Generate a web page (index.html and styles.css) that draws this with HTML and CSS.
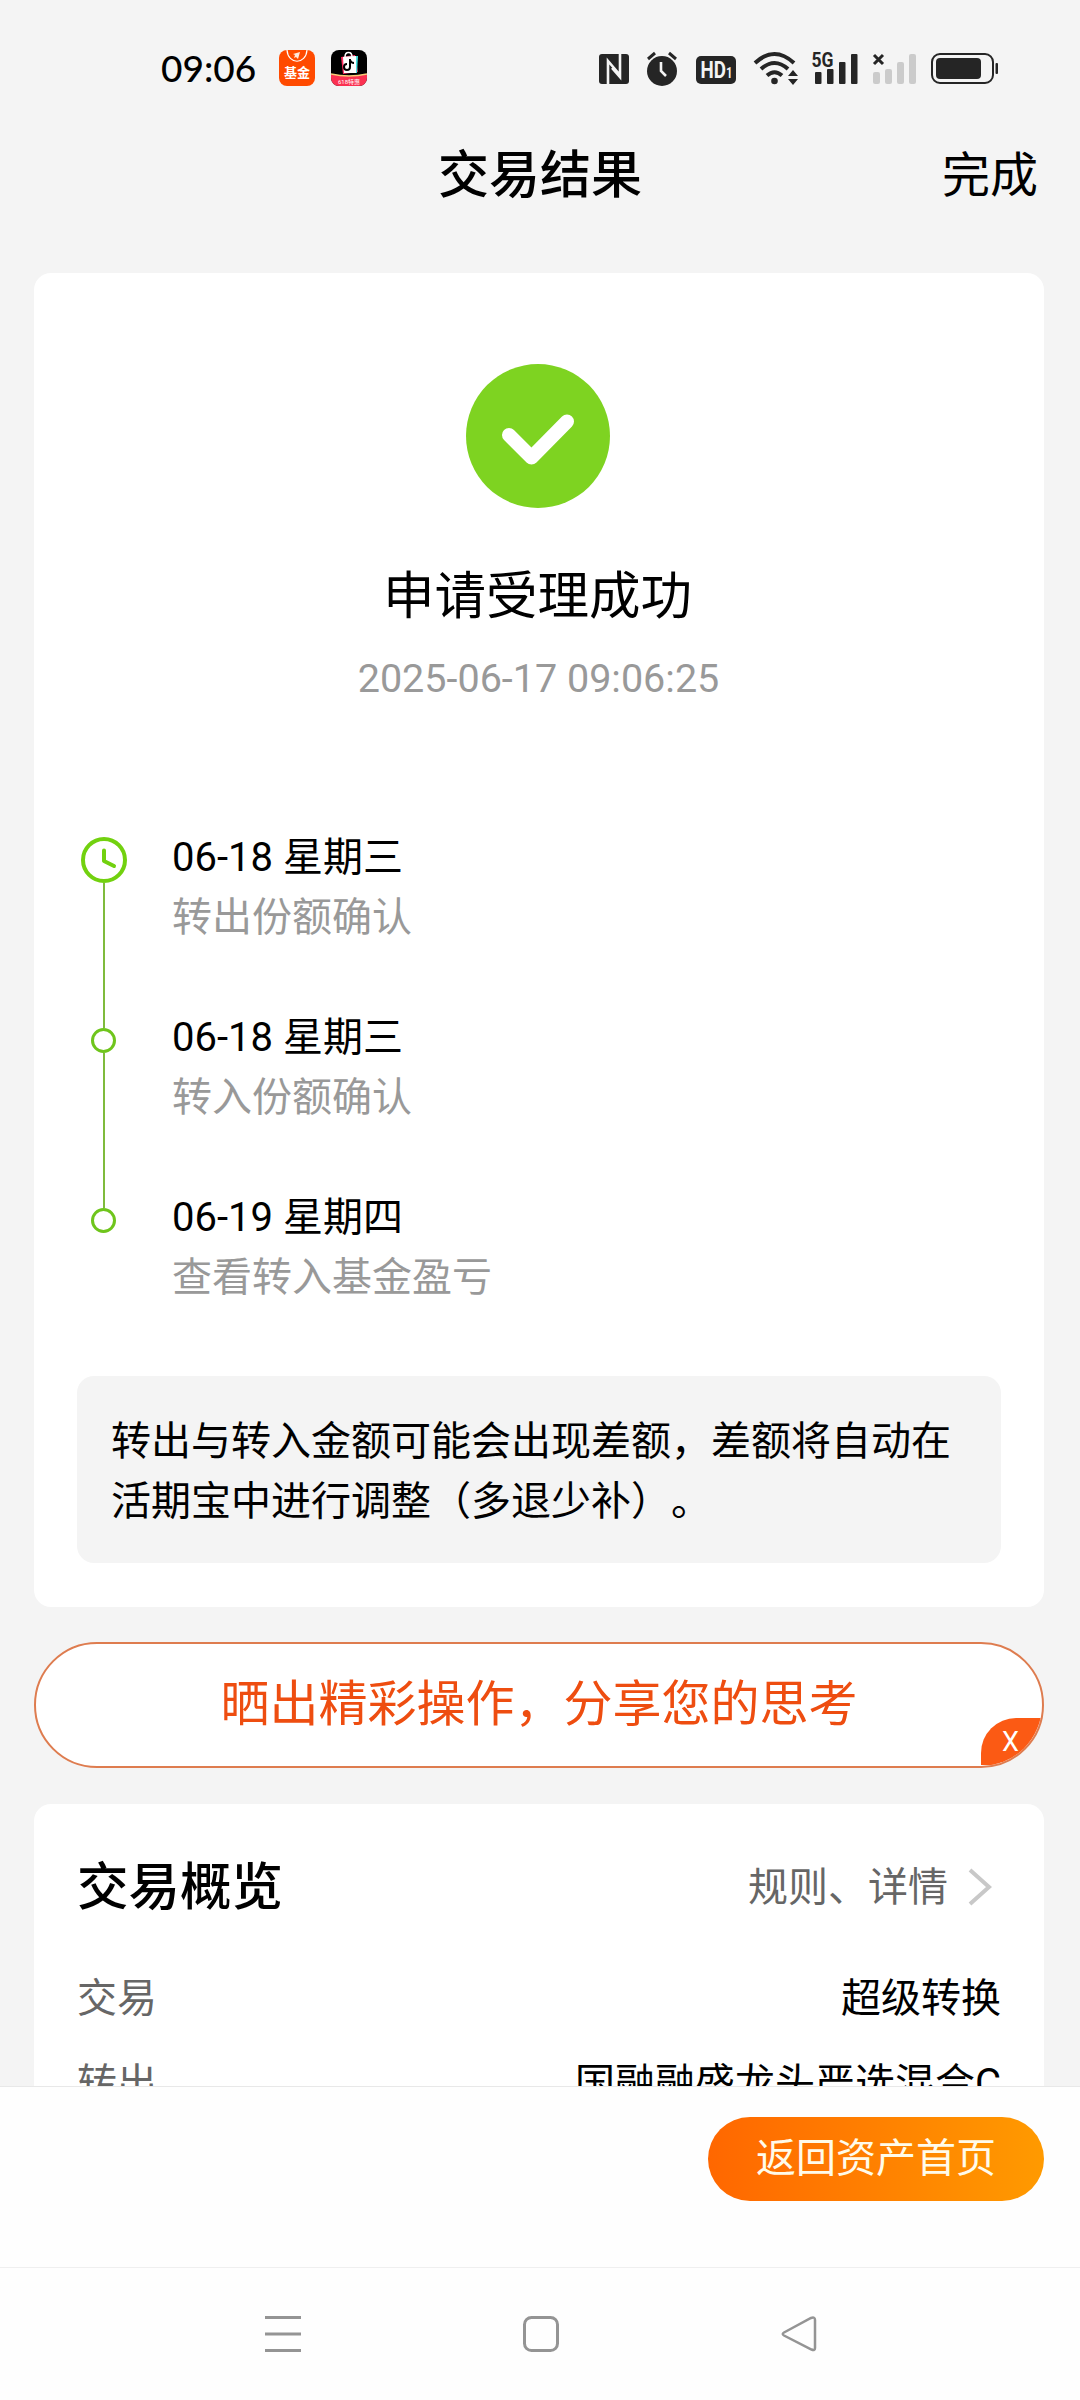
FILE: index.html
```html
<!DOCTYPE html>
<html lang="zh-CN">
<head>
  <meta charset="UTF-8" />
  <meta name="viewport" content="width=device-width, initial-scale=1.0"/>
  <title>交易结果</title>
  <link rel="stylesheet" href="styles.css">
</head>
<body>
  <div class="page">
    <div class="status-bar">
      <div class="status-left">
        <span class="time">09:06</span>
        <svg class="app-icon" width="36" height="36" viewBox="0 0 36 36">
          <rect width="36" height="36" rx="8" fill="#ff4a00"/>
          <path d="M8 0C9 15 27 15 28 0" fill="none" stroke="#fff" stroke-width="1.2"/>
          <path d="M14 4l7-2-2 7-2-2-2 1 1-3z" fill="#ffe9dd"/>
          <text x="18" y="27" class="fund-text">基金</text>
        </svg>
        <svg class="app-icon" width="36" height="36" viewBox="0 0 36 36">
          <defs><clipPath id="shop"><rect width="36" height="36" rx="8"/></clipPath></defs>
          <g clip-path="url(#shop)">
            <rect width="36" height="36" fill="#000"/>
            <path d="M10 7l14-2 3 17-15 2z" fill="#ff2d60"/>
            <path d="M14 7l13-1 -1 17-12 0z" fill="#48e5e5"/>
            <path d="M12 7l13-1 0 17-12 0z" fill="#fff"/>
            <path d="M14 7c0-6 7-6 7 0" fill="none" stroke="#fff" stroke-width="1.5"/>
            <path d="M19 9v8a3 3 0 1 1-3-3M19 10q1 3 4 3" fill="none" stroke="#000" stroke-width="2"/>
            <path d="M0 24q18 4 36 0v12H0z" fill="#fb3151"/>
            <path d="M0 24q18 4 36 0" fill="none" stroke="#f6cc78" stroke-width="1.5"/>
            <text x="18" y="33.500" class="shop-text">618特惠</text>
          </g>
        </svg>
      </div>
      <div class="status-right">
        <svg width="401" height="38" viewBox="0 0 401 38">
          <!-- NFC -->
          <rect x="0" y="4" width="30" height="30" rx="3" fill="#252525"/>
          <path d="M9 34V11l12 14M21 4v23L13 18" fill="none" stroke="#f4f4f4" stroke-width="2.6"/>
          <!-- alarm -->
          <circle cx="63" cy="21" r="15" fill="#252525"/>
          <path d="M49 9l7-6M77 9l-7-6" stroke="#252525" stroke-width="3"/>
          <path d="M62 12v9l5 5" fill="none" stroke="#f4f4f4" stroke-width="2.6"/>
          <!-- HD -->
          <rect x="97" y="6" width="40" height="28" rx="5" fill="#252525"/>
          <text x="101.500" y="28" class="hd-text" textLength="32" lengthAdjust="spacingAndGlyphs">HD<tspan class="hd-sub">1</tspan></text>
          <!-- wifi -->
          <g fill="none" stroke="#252525" stroke-width="4">
            <path d="M156 13Q175.500-5 195 13"/>
            <path d="M162 19Q175.500 7 189 19"/>
            <path d="M168 25.500Q175.500 19 183 25.500"/>
          </g>
          <circle cx="175.500" cy="31" r="3.300" fill="#252525"/>
          <path d="M189 26l5-6 5 6zM189 29h10l-5 6z" fill="#252525"/>
          <!-- 5G signal -->
          <text x="212.500" y="17" class="net-text" textLength="22" lengthAdjust="spacingAndGlyphs">5G</text>
          <g fill="#252525">
            <rect x="216" y="22" width="6.500" height="12" rx="1"/>
            <rect x="228" y="19" width="6.500" height="15" rx="1"/>
            <rect x="240" y="12" width="6.500" height="22" rx="1"/>
            <rect x="252" y="4" width="6.500" height="30" rx="1"/>
          </g>
          <!-- second sim, no service -->
          <path d="M275 5l9 9M284 5l-9 9" stroke="#252525" stroke-width="3"/>
          <g fill="#cbcbcb">
            <rect x="274" y="22" width="7" height="12" rx="2"/>
            <rect x="286" y="19" width="7" height="15" rx="2"/>
            <rect x="298" y="12" width="7" height="22" rx="2"/>
            <rect x="310" y="4" width="7" height="30" rx="2"/>
          </g>
          <!-- battery -->
          <rect x="333" y="4" width="61" height="29" rx="8" fill="none" stroke="#252525" stroke-width="2"/>
          <rect x="337" y="8" width="45" height="21" rx="4" fill="#252525"/>
          <rect x="396.500" y="13" width="2.500" height="11" rx="1" fill="#252525"/>
        </svg>
      </div>
    </div>

    <header class="nav">
      <h1>交易结果</h1>
      <a class="done">完成</a>
    </header>

    <main class="content">
      <section class="card result">
        <svg class="success-icon" width="144" height="144" viewBox="0 0 144 144">
          <circle cx="72" cy="72" r="72" fill="#7ed321"/>
          <path d="M43 71l22.500 22.500L101 57.500" fill="none" stroke="#fff" stroke-width="14" stroke-linecap="round" stroke-linejoin="round"/>
        </svg>
        <h2>申请受理成功</h2>
        <p class="result-time">2025-06-17 09:06:25</p>

        <ul class="timeline">
          <li>
            <div class="marker">
              <svg width="46" height="46" viewBox="0 0 46 46">
                <circle cx="23" cy="23" r="21" fill="#fff" stroke="#72d10f" stroke-width="4"/>
                <path d="M23 13.500V24l10 5" fill="none" stroke="#72d10f" stroke-width="4" stroke-linecap="round" stroke-linejoin="round"/>
              </svg>
            </div>
            <div class="step">
              <div class="step-date">06-18 星期三</div>
              <div class="step-desc">转出份额确认</div>
            </div>
          </li>
          <li>
            <div class="marker"><span class="dot"></span></div>
            <div class="step">
              <div class="step-date">06-18 星期三</div>
              <div class="step-desc">转入份额确认</div>
            </div>
          </li>
          <li>
            <div class="marker"><span class="dot"></span></div>
            <div class="step">
              <div class="step-date">06-19 星期四</div>
              <div class="step-desc">查看转入基金盈亏</div>
            </div>
          </li>
        </ul>

        <div class="notice">转出与转入金额可能会出现差额，差额将自动在<br>活期宝中进行调整（多退少补）。</div>
      </section>

      <div class="share">
        <span>晒出精彩操作，分享您的思考</span>
        <span class="share-close">X</span>
      </div>

      <section class="card overview">
        <div class="overview-head">
          <h3>交易概览</h3>
          <a class="more">规则、详情
            <svg width="24" height="38" viewBox="0 0 24 38">
              <path d="M2 2l19 17L2 36" fill="none" stroke="#c8c8c8" stroke-width="4"/>
            </svg>
          </a>
        </div>
        <div class="row"><span class="label">交易</span><span>超级转换</span></div>
        <div class="row"><span class="label">转出</span><span>国融融盛龙头严选混合C</span></div>
      </section>
    </main>

    <footer class="bottom-bar">
      <button class="btn">返回资产首页</button>
    </footer>

    <div class="system-nav">
      <svg width="36" height="38" viewBox="0 0 36 38">
        <path d="M0 2.500h36M0 19h36M0 35.500h36" stroke="#949494" stroke-width="3"/>
      </svg>
      <svg width="36" height="38" viewBox="0 0 36 38">
        <rect x="1.500" y="2.500" width="33" height="33" rx="7" fill="none" stroke="#949494" stroke-width="3"/>
      </svg>
      <svg width="36" height="38" viewBox="0 0 36 38">
        <path d="M3 17.500L30 3Q34 1.500 34 5V33Q34 36 30.500 34.500L3 20.500Q.500 19 3 17.500z" fill="none" stroke="#949494" stroke-width="2.500"/>
      </svg>
    </div>
  </div>
</body>
</html>
```

FILE: styles.css
```css
* {
  margin: 0;
  padding: 0;
  box-sizing: border-box;
}

body {
  font-family: Roboto, 'Noto Sans CJK SC', sans-serif;
  font-size: 40px;
  line-height: 60px;
  color: #000;
  background: #f4f4f4;
  text-spacing-trim: space-all;
}

svg {
  display: block;
  flex-shrink: 0;
}

.page {
  width: 1080px;
  height: 2400px;
  display: flex;
  flex-direction: column;
  overflow: hidden;
}

.status-bar {
  height: 120px;
  flex-shrink: 0;
  display: flex;
  justify-content: space-between;
  padding: 50px 80px 0 161px;
}

.status-left {
  display: flex;
  align-items: flex-start;
}

.time {
  font-family: Lato, sans-serif;
  font-size: 37px;
  font-weight: 500;
  line-height: 36px;
  width: 118px;
  white-space: nowrap;
}

.app-icon {
  margin-right: 16px;
}

.fund-text {
  font-size: 13px;
  font-weight: 700;
  fill: #fff;
  text-anchor: middle;
}

.shop-text {
  font-size: 6px;
  fill: #fff;
  text-anchor: middle;
}

.hd-text {
  font-size: 23px;
  font-weight: 700;
  fill: #f4f4f4;
}

.hd-sub {
  font-size: 14px;
}

.net-text {
  font-size: 21px;
  font-weight: 700;
  fill: #252525;
}

.nav {
  height: 153px;
  flex-shrink: 0;
  display: grid;
  grid-template-columns: 1fr auto 1fr;
  align-items: start;
  padding: 26px 42px 0;
}

.nav h1 {
  grid-column: 2;
  font-size: 51px;
  font-weight: 500;
}

.done {
  justify-self: end;
  font-size: 48px;
}

.content {
  height: 1813px;
  flex-shrink: 0;
  overflow: hidden;
  padding: 0 36px 0 34px;
}

.card {
  background: #fff;
  border-radius: 17px;
}

.result {
  height: 1334px;
  padding: 91px 43px 0;
}

.success-icon {
  margin: 0 auto;
  transform: translateX(-1px);
}

.result h2 {
  margin: 59px 3px 0 0;
  text-align: center;
  font-size: 51.5px;
  font-weight: 400;
}

.result-time {
  margin: 22px 1px 0 0;
  text-align: center;
  font-size: 39.5px;
  color: #999;
}

.timeline {
  list-style: none;
  margin-top: 119px;
  height: 548px;
}

.timeline li {
  display: flex;
  height: 180px;
}

.marker {
  width: 53px;
  margin-right: 42px;
  padding-top: 9px;
  display: flex;
  flex-direction: column;
  align-items: center;
}

/* line running down to the next marker */
.timeline li:not(:last-child) .marker::after {
  content: '';
  width: 2px;
  flex: 1;
  background: #7fbb3c;
}

.timeline li + li .marker {
  padding-top: 20px;
}

.timeline li:not(:last-child) .marker {
  height: 200px;
}

.dot {
  width: 25px;
  height: 25px;
  flex-shrink: 0;
  border: 3px solid #6fc51c;
  border-radius: 50%;
  background: #fff;
}

.step-desc {
  color: #999;
}

.notice {
  height: 187px;
  padding: 36px 34px 30px;
  border-radius: 17px;
  background: #f4f4f4;
  white-space: nowrap;
}

.share {
  position: relative;
  height: 126px;
  margin: 35px 0 36px;
  display: flex;
  align-items: center;
  justify-content: center;
  border: 2px solid #de7c4f;
  border-radius: 63px;
  background: #fff;
  color: #ee4d10;
  font-size: 49px;
  overflow: hidden;
}

.share-close {
  position: absolute;
  right: 0;
  bottom: 1px;
  width: 61px;
  height: 47px;
  padding-left: 21px;
  border-top-left-radius: 35px;
  background: #fb5a14;
  color: #fff;
  font-size: 27px;
  line-height: 49px;
}

.overview {
  height: 500px;
  padding: 54px 43px 0;
}

.overview-head {
  display: flex;
  justify-content: space-between;
  align-items: center;
  margin-bottom: 51px;
}

.overview-head h3 {
  font-size: 51.5px;
  font-weight: 500;
}

.more {
  display: flex;
  align-items: center;
  gap: 20px;
  padding-right: 9px;
  color: #666;
}

.more svg {
  margin-top: -3px;
}

.row {
  display: flex;
  justify-content: space-between;
  margin-bottom: 25px;
}

.label {
  color: #666;
}

.bottom-bar {
  height: 181px;
  flex-shrink: 0;
  display: flex;
  justify-content: flex-end;
  align-items: flex-start;
  padding: 30px 36px 0;
  background: #fefefe;
  border-top: 1px solid #e8e8e8;
}

.btn {
  width: 336px;
  height: 84px;
  border: none;
  border-radius: 42px;
  background: linear-gradient(90deg, #ff6700, #ff9a00);
  color: #fffbea;
  font-family: inherit;
  font-size: 40px;
  line-height: 60px;
}

.system-nav {
  height: 133px;
  flex-shrink: 0;
  display: flex;
  justify-content: space-between;
  padding: 47px 263px 0 265px;
  background: #fefefe;
  border-top: 1px solid #efefef;
}
```
